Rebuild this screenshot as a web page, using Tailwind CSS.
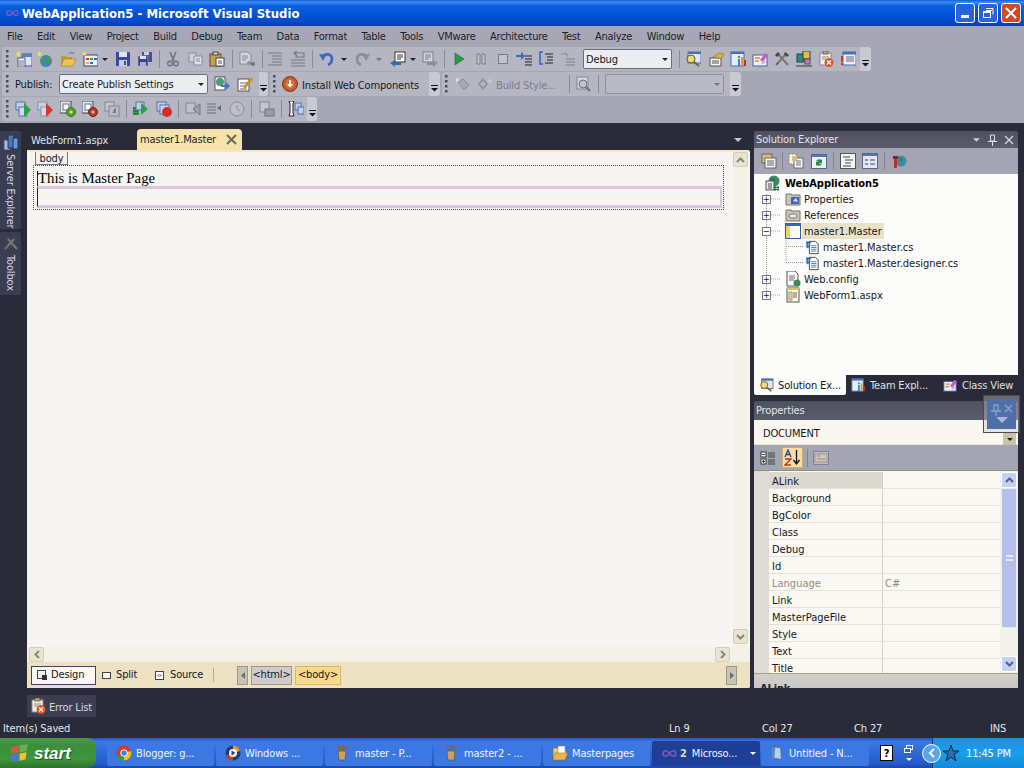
<!DOCTYPE html>
<html>
<head>
<meta charset="utf-8">
<script src="https://cdn.jsdelivr.net/npm/@tailwindcss/browser@4"></script>
</head>
<body class="overflow-hidden">
<svg class="hidden" xmlns="http://www.w3.org/2000/svg">
<defs>
<symbol id="star" viewBox="0 0 16 16"><path d="M4 0l1 3 3-1-2 3 2 2-3 0-1 3-1-3-3 0 2-2-2-3 3 1z" fill="#f7e04a"/></symbol>
<symbol id="newproj" viewBox="0 0 16 16"><rect x="6" y="3" width="10" height="12" fill="#dfe6f5" stroke="#3d5f9c"/><rect x="6" y="3" width="10" height="3" fill="#5a7fc4"/><rect x="2" y="7" width="7" height="9" fill="#fff" stroke="#555"/><path d="M3 10h5M3 12h5M3 14h5" stroke="#4a6fb0"/><use href="#star" width="10" height="10"/></symbol>
<symbol id="newweb" viewBox="0 0 16 16"><circle cx="9" cy="10" r="6" fill="#3f86b8"/><path d="M5 6l4 2 0 3-3 2zM11 5l3 3-1 4-3-2z" fill="#4f9a3a"/><use href="#star" width="10" height="10"/></symbol>
<symbol id="open" viewBox="0 0 16 16"><path d="M1 5h5l1 1h5v3H4l-3 6z" fill="#c9962f"/><path d="M4 8h12l-3 7H1z" fill="#f0c35a" stroke="#a87a20" stroke-width=".6"/><path d="M9 3c2-2 4-2 5 0" stroke="#3d5f9c" fill="none"/></symbol>
<symbol id="additem" viewBox="0 0 16 16"><rect x="2" y="4" width="14" height="11" fill="#eef0f5" stroke="#444"/><rect x="4" y="7" width="3" height="2" fill="#d33"/><rect x="8" y="7" width="3" height="2" fill="#3a3"/><rect x="12" y="7" width="3" height="2" fill="#36c"/><rect x="4" y="11" width="3" height="2" fill="#db3"/><rect x="8" y="11" width="3" height="2" fill="#36c"/><use href="#star" width="9" height="9"/></symbol>
<symbol id="save" viewBox="0 0 16 16"><path d="M1 1h13l1 1v13H1z" fill="#3a4a9c"/><rect x="4" y="1" width="8" height="5" fill="#dfe3f2"/><rect x="4" y="9" width="8" height="6" fill="#c8cde0"/><rect x="9" y="10" width="2" height="4" fill="#3a4a9c"/></symbol>
<symbol id="saveall" viewBox="0 0 16 16"><path d="M5 1h10v10H5z" fill="#4a4f92"/><rect x="7" y="1" width="5" height="3" fill="#c8cde0"/><path d="M1 5h10v10H1z" fill="#3e4487" stroke="#b0b4d0" stroke-width=".5"/><rect x="3" y="5" width="6" height="3" fill="#dfe3f2"/><rect x="3" y="11" width="6" height="4" fill="#aab0d0"/></symbol>
<symbol id="cut" viewBox="0 0 16 16"><path d="M5 1l4 9M11 1l-4 9" stroke="#70717c" stroke-width="1.6" fill="none"/><circle cx="5" cy="12.5" r="2.3" fill="none" stroke="#70717c" stroke-width="1.4"/><circle cx="11" cy="12.5" r="2.3" fill="none" stroke="#70717c" stroke-width="1.4"/></symbol>
<symbol id="copy" viewBox="0 0 16 16"><path d="M1 2h7v9H1z" fill="#d0d1d8" stroke="#8b8c96"/><path d="M6 5h8v9H6z" fill="#dddde3" stroke="#8b8c96"/><path d="M8 8h4M8 10h4" stroke="#8b8c96"/></symbol>
<symbol id="paste" viewBox="0 0 16 16"><rect x="1" y="3" width="11" height="12" fill="#c99f50" stroke="#5a4a2a"/><rect x="4" y="1" width="5" height="3" fill="#d8d8d8" stroke="#444"/><rect x="7" y="7" width="8" height="8" fill="#fff" stroke="#444"/><path d="M9 10h4M9 12h4" stroke="#556"/></symbol>
<symbol id="find" viewBox="0 0 16 16"><path d="M1 1h8l3 3v9H1z" fill="#d5d6dc" stroke="#878893"/><path d="M3 5h6M3 7h6M3 9h4" stroke="#878893"/><circle cx="10" cy="12" r="2" fill="#8c8d97"/><circle cx="14" cy="13" r="2" fill="#6e6f79"/></symbol>
<symbol id="lines1" viewBox="0 0 16 16"><path d="M1 2h14M5 5h10M5 8h10M5 11h10M1 14h14" stroke="#75767f" stroke-width="1.2"/></symbol>
<symbol id="lines2" viewBox="0 0 16 16"><path d="M5 2h9v4h-9M7 0L4 2l3 3" stroke="#75767f" fill="none" stroke-width="1.2"/><path d="M1 9h14M1 12h14M1 15h14" stroke="#75767f" stroke-width="1.2"/></symbol>
<symbol id="undo" viewBox="0 0 16 16"><path d="M3 7c2-5 10-5 10 1 0 3-2 5-4 6" stroke="#3c66c4" stroke-width="2.6" fill="none"/><path d="M0 3l7 1-3 6z" fill="#3c66c4"/></symbol>
<symbol id="redo" viewBox="0 0 16 16"><path d="M13 7C11 2 3 2 3 8c0 3 2 5 4 6" stroke="#8b8c97" stroke-width="2.6" fill="none"/><path d="M16 3L9 4l3 6z" fill="#8b8c97"/></symbol>
<symbol id="navb" viewBox="0 0 16 16"><rect x="5" y="1" width="10" height="10" fill="#fff" stroke="#333"/><path d="M7 4h6M7 6h6M7 8h4" stroke="#333"/><path d="M0 12l5-3v2h6v3H5v2z" fill="#3c66c4"/></symbol>
<symbol id="navf" viewBox="0 0 16 16"><rect x="1" y="1" width="10" height="10" fill="#d5d6dc" stroke="#7b7c88"/><path d="M3 4h6M3 6h6M3 8h4" stroke="#7b7c88"/><path d="M16 12l-5-3v2H5v3h6v2z" fill="#8c8d98"/></symbol>
<symbol id="play" viewBox="0 0 16 16"><path d="M4 2l9 6-9 6z" fill="#2f9a3a" stroke="#1f6a30" stroke-width=".6"/></symbol>
<symbol id="pause" viewBox="0 0 16 16"><path d="M4 3h3v10H4zM9 3h3v10H9z" fill="#c2c3cc" stroke="#7b7c87"/></symbol>
<symbol id="stop" viewBox="0 0 16 16"><rect x="3.5" y="3.5" width="9" height="9" fill="#c2c3cc" stroke="#7b7c87"/></symbol>
<symbol id="step1" viewBox="0 0 16 16"><path d="M0 4h5V1l4 4-4 4V6H0z" fill="#3c66c4"/><path d="M9 5h7M9 8h7M9 11h7M9 14h7" stroke="#222" stroke-width="1.2"/></symbol>
<symbol id="step2" viewBox="0 0 16 16"><path d="M5 1H2v12h3" stroke="#3c66c4" stroke-width="1.6" fill="none"/><path d="M7 3h8M9 6h6M9 9h6M7 12h8" stroke="#222" stroke-width="1.2"/></symbol>
<symbol id="step3" viewBox="0 0 16 16"><path d="M1 3h6v3M5 1l3 3" stroke="#8c8d98" fill="none"/><path d="M6 8h9M6 11h9M6 14h9" stroke="#7b7c87" stroke-width="1.2"/></symbol>
<symbol id="wfind" viewBox="0 0 16 16"><rect x="3" y="1" width="13" height="11" fill="#dfe6f5" stroke="#4a6fb0"/><rect x="3" y="1" width="13" height="2" fill="#4a6fb0"/><circle cx="6" cy="8" r="4" fill="#f0d880" stroke="#6a5a20"/><path d="M9 11l5 4" stroke="#6a6a3a" stroke-width="2"/></symbol>
<symbol id="wprops" viewBox="0 0 16 16"><path d="M2 7h11v8H2z" fill="#f4f4f4" stroke="#555"/><path d="M4 10h7M4 12h7" stroke="#555"/><path d="M5 6l6-4 5 1-3 5z" fill="#d8b040" stroke="#7a6020" stroke-width=".5"/></symbol>
<symbol id="wteam" viewBox="0 0 16 16"><rect x="1" y="1" width="13" height="14" fill="#e8ecf6" stroke="#4a6fb0"/><rect x="1" y="1" width="13" height="2" fill="#4a6fb0"/><rect x="8" y="8" width="2" height="7" fill="#3a7fd0"/><rect x="11" y="6" width="2" height="9" fill="#d0a030"/><rect x="14" y="9" width="2" height="6" fill="#c03030"/><circle cx="9" cy="6" r="1.2" fill="#40a040"/></symbol>
<symbol id="wclass" viewBox="0 0 16 16"><rect x="1" y="4" width="14" height="11" fill="#eef0f8" stroke="#4a5fa0"/><path d="M3 7h5M3 10h4" stroke="#d09030" stroke-width="1.6"/><path d="M8 9l5-7 3 2-5 7z" fill="#c060c0"/><path d="M9 12l3-3 2 2-3 2z" fill="#e0a0e0"/></symbol>
<symbol id="tools" viewBox="0 0 16 16"><path d="M2 14L12 3M14 14L4 3" stroke="#777" stroke-width="2"/><path d="M2 14l1.5-3 1.5 1.5z" fill="#c33"/><path d="M11 1l4 3-2 2-3-3zM1 4l3-3 2 2-3 3z" fill="#444"/></symbol>
<symbol id="boxes" viewBox="0 0 16 16"><rect x="1" y="3" width="7" height="8" fill="#3a8a60" stroke="#1e3a70"/><rect x="7" y="0" width="7" height="8" fill="#e0c040" stroke="#1e3a70"/><rect x="9" y="8" width="5" height="5" fill="#e070b0" stroke="#555"/><rect x="0" y="14" width="16" height="2" fill="#777"/></symbol>
<symbol id="errlist" viewBox="0 0 16 16"><rect x="2" y="2" width="11" height="12" fill="#f4f1e6" stroke="#888"/><rect x="5" y="0" width="5" height="3" fill="#c9a860" stroke="#665"/><path d="M4 6h7M4 8h4" stroke="#888"/><circle cx="11" cy="11.5" r="4.5" fill="#e0552d"/><path d="M9 9.5l4 4M13 9.5l-4 4" stroke="#fff" stroke-width="1.2"/></symbol>
<symbol id="wtasks" viewBox="0 0 16 16"><rect x="3" y="1" width="13" height="13" fill="#eef0f8" stroke="#4a6fb0"/><rect x="3" y="1" width="13" height="2.5" fill="#4a6fb0"/><path d="M6 6h8M6 8h8M6 10h8" stroke="#667"/><path d="M1 5h2v6H1z" fill="#d03030"/><rect x="1" y="12" width="2" height="2" fill="#d03030"/></symbol>
<symbol id="pubweb" viewBox="0 0 16 16"><rect x="1" y="1" width="10" height="13" fill="#fff" stroke="#555"/><circle cx="6" cy="6" r="4" fill="#4f9a7a"/><path d="M7 9h5V6l4 4-4 4v-3H7z" fill="#3c76d4"/></symbol>
<symbol id="pubedit" viewBox="0 0 16 16"><rect x="1" y="3" width="11" height="12" fill="#fff" stroke="#555"/><path d="M3 7h7M3 10h7M3 13h7" stroke="#667"/><path d="M7 10l7-9 2 2-7 9-3 1z" fill="#d09020"/></symbol>
<symbol id="install" viewBox="0 0 16 16"><circle cx="8" cy="8" r="7.5" fill="#c8582a" stroke="#7a3a1a"/><circle cx="8" cy="8" r="5" fill="#d87038"/><path d="M7 4h2v4h2l-3 3.5L5 8h2z" fill="#fff"/></symbol>
<symbol id="tag" viewBox="0 0 16 16"><path d="M3 6l5-3 6 6-5 5z" fill="#a8a9b2" stroke="#8a8b95"/><path d="M2 1l1 2 2-1-1 2 1 1-2 0-1 2-1-2-1 0 1-1z" fill="#d8d9e0"/></symbol>
<symbol id="style" viewBox="0 0 16 16"><path d="M1 8l5-6 5 6-5 6z" fill="#8f909a"/><path d="M3 8l3-3 3 3-3 3z" fill="#b8b9c2"/><path d="M13 2l1 2 2 1-2 1-1 2-1-2-2-1 2-1z" fill="#c8c9d0"/></symbol>
<symbol id="gfind" viewBox="0 0 16 16"><rect x="1" y="1" width="11" height="12" fill="#d5d6dc" stroke="#83848f"/><circle cx="7" cy="8" r="4" fill="#c0c1c9" stroke="#6e6f79"/><path d="M10 11l4 4" stroke="#6e6f79" stroke-width="2"/></symbol>
<symbol id="d1" viewBox="0 0 16 16"><rect x="1" y="1" width="9" height="8" fill="#c8d0e4" stroke="#5a70a8"/><rect x="4" y="6" width="8" height="9" fill="#cddcf0" stroke="#5a70a8"/><path d="M9 2l7 7-7 7z" fill="#2fa04a"/></symbol>
<symbol id="d2" viewBox="0 0 16 16"><rect x="1" y="1" width="9" height="8" fill="#c8d0e4" stroke="#8a90b0"/><rect x="4" y="6" width="8" height="9" fill="#cddcf0" stroke="#8a90b0"/><path d="M9 2l7 7-7 7z" fill="#d23a2a"/></symbol>
<symbol id="d3" viewBox="0 0 16 16"><rect x="0" y="0" width="11" height="12" fill="#e4e6f0" stroke="#444"/><rect x="3" y="3" width="6" height="6" fill="#fff" stroke="#5a70a8"/><circle cx="11" cy="11" r="4.5" fill="#5aa02a" stroke="#3a7018"/><circle cx="11" cy="11" r="1.5" fill="#cfe8a0"/></symbol>
<symbol id="d4" viewBox="0 0 16 16"><rect x="0" y="0" width="11" height="12" fill="#e4e6f0" stroke="#444"/><rect x="3" y="3" width="6" height="6" fill="#fff" stroke="#5a70a8"/><circle cx="11" cy="11" r="4.5" fill="#b83a2a" stroke="#702018"/><circle cx="11" cy="11" r="1.5" fill="#f0c0a0"/></symbol>
<symbol id="d5" viewBox="0 0 16 16"><rect x="1" y="1" width="9" height="9" fill="#c5c6ce" stroke="#83848f"/><rect x="5" y="5" width="10" height="10" fill="#bcbdc6" stroke="#83848f"/><path d="M12 7v5H8l1-1 1-3z" fill="#7b7c87"/></symbol>
<symbol id="d6" viewBox="0 0 16 16"><rect x="0" y="6" width="6" height="8" fill="#3a9a4a"/><path d="M0 7h5M0 10h5M0 13h5" stroke="#1f6a30"/><rect x="3" y="1" width="8" height="8" fill="#bcd0ea" stroke="#5a70a8"/><path d="M8 2l7 6-7 6z" fill="#2fa04a"/></symbol>
<symbol id="d7" viewBox="0 0 16 16"><rect x="1" y="1" width="9" height="9" fill="#c5d0e8" stroke="#5a70a8"/><rect x="4" y="4" width="9" height="9" fill="#cdd8ee" stroke="#5a70a8"/><circle cx="11" cy="11" r="5" fill="#d92a26"/></symbol>
<symbol id="d8" viewBox="0 0 16 16"><rect x="1" y="2" width="9" height="10" fill="#c0c1ca" stroke="#83848f"/><path d="M15 3L8 8l7 6z" fill="#a0a1ab" stroke="#73747f"/></symbol>
<symbol id="d9" viewBox="0 0 16 16"><path d="M1 3h9M1 6h9M1 9h9M1 12h9" stroke="#6c6d76" stroke-width="1.2"/><path d="M11 7l4-3v6z" fill="#6c6d76"/></symbol>
<symbol id="d10" viewBox="0 0 16 16"><circle cx="8" cy="8" r="7" fill="#bdbec6" stroke="#8b8c96"/><path d="M8 4v4l3 2" stroke="#8b8c96" fill="none"/></symbol>
<symbol id="d11" viewBox="0 0 16 16"><path d="M1 1h9v10H1z" fill="#c5c6ce" stroke="#84858f"/><rect x="6" y="8" width="9" height="7" fill="#9a9ba5" stroke="#74757f"/></symbol>
<symbol id="d12" viewBox="0 0 16 16"><path d="M1 0h5l-1 3v9l1 3H1l1-3V3z" fill="#f4f4f6" stroke="#222"/><rect x="7" y="2" width="6" height="7" fill="#bcd0ea" stroke="#4a70b0"/><rect x="10" y="6" width="6" height="7" fill="#bcd0ea" stroke="#4a70b0"/></symbol>
<symbol id="globeproj" viewBox="0 0 16 16"><circle cx="9" cy="6" r="5.5" fill="#3a8a70"/><path d="M6 3l4 1-1 4-3-1z" fill="#2f7a2a"/><rect x="1" y="6" width="8" height="9" fill="#e8e8f0" stroke="#555"/><path d="M3 9h4M3 11h4M3 13h4" stroke="#555"/><path d="M10 11v5M13 11v5M9 12.500h5M9 14.500h5" stroke="#176a2a"/></symbol>
<symbol id="folder" viewBox="0 0 16 16"><path d="M1 3h5l1 1h8v10H1z" fill="#c8c4b8" stroke="#7a7468"/><rect x="6" y="6" width="8" height="7" fill="#3c66c4"/><path d="M8 10l3-3 2 4z" fill="#dfe6f5"/></symbol>
<symbol id="refs" viewBox="0 0 16 16"><path d="M1 3h5l1 1h8v10H1z" fill="#c8c4b8" stroke="#7a7468"/><rect x="4" y="7" width="8" height="4" rx="2" fill="#e8e8ec" stroke="#777"/></symbol>
<symbol id="master" viewBox="0 0 16 16"><rect x=".5" y=".5" width="15" height="15" fill="#fcfcf8" stroke="#3a5a9a"/><rect x="1" y="1" width="14" height="2" fill="#3a6ab0"/><rect x="1" y="3" width="4" height="12" fill="#f0d070"/></symbol>
<symbol id="csfile" viewBox="0 0 16 16"><path d="M5 1h7l3 3v11H5z" fill="#fff" stroke="#333"/><path d="M7 6h6M7 8h6M7 10h6M7 12h6" stroke="#4a6fb0"/><path d="M1 1l6 0v2H4v3l3-1-4 4-3-4 2 1z" fill="#2a6ac0"/></symbol>
<symbol id="config" viewBox="0 0 16 16"><path d="M2 0h8l3 3v12H2z" fill="#fff" stroke="#555"/><path d="M4 5h6M4 7h6M4 9h5" stroke="#667"/><circle cx="12" cy="12" r="3.5" fill="#3a8a50"/></symbol>
<symbol id="aspx" viewBox="0 0 16 16"><rect x="2" y="1" width="12" height="14" fill="#fbf6dc" stroke="#555"/><rect x="2" y="1" width="12" height="2" fill="#d8c070"/><path d="M4 5h3v8H4z" fill="#ecd890" stroke="#998"/><path d="M8 6h4M8 8h4M8 10h4" stroke="#667"/></symbol>
<symbol id="srvexp" viewBox="0 0 16 16"><rect x="1" y="6" width="6" height="10" fill="#a8c0e4" stroke="#456"/><rect x="5" y="1" width="6" height="13" fill="#4878c8" stroke="#234"/><rect x="10" y="4" width="5" height="11" fill="#6898e0" stroke="#234"/></symbol>
<symbol id="chrome" viewBox="0 0 16 16"><circle cx="8" cy="8" r="7.5" fill="#d8392b"/><path d="M8 8L1 12a7.5 7.5 0 0 0 7 3.5z" fill="#2f9e44"/><path d="M8 8l7-2a7.5 7.5 0 0 1-7 9.5z" fill="#f4c20d"/><circle cx="8" cy="8" r="3.3" fill="#3f7fe8" stroke="#fff" stroke-width="1"/></symbol>
<symbol id="wmp" viewBox="0 0 16 16"><circle cx="8" cy="8" r="7.5" fill="#233a80"/><path d="M8 .5A7.5 7.5 0 0 1 15 6L8 8z" fill="#e8a020"/><path d="M1 10a7.500 7.500 0 0 0 7 5.500L8 8z" fill="#c84020"/><circle cx="8" cy="8" r="4" fill="#fff"/><path d="M6.500 5.500l4 2.500-4 2.500z" fill="#233a80"/></symbol>
<symbol id="paint" viewBox="0 0 16 16"><path d="M4 6h8l-1 9H5z" fill="#c9a460" stroke="#5a4a2a" stroke-width=".6"/><path d="M5 6L3 0l3 1zM8 6V0l2 1zM11 6l2-6 1 2z" fill="#d43a3a"/><path d="M7 6L6 1M9 6l2-5" stroke="#2f8f4a" stroke-width="1.3"/></symbol>
<symbol id="foldertb" viewBox="0 0 16 16"><path d="M1 3h5l1 1h7v3h1l-2 8H1z" fill="#f0c868" stroke="#8a6a20" stroke-width=".6"/><rect x="6" y="1" width="7" height="8" fill="#fff" stroke="#888" stroke-width=".6"/><path d="M3 8h13l-3 7H1z" fill="#e8b84a" stroke="#8a6a20" stroke-width=".5"/></symbol>
<symbol id="notepad" viewBox="0 0 16 16"><path d="M4 1l8 1 1 13-9-1z" fill="#b8d0ee" stroke="#456" stroke-width=".6"/><path d="M2 2l4-1-1 13-3 1z" fill="#5888c8"/></symbol>
<symbol id="vs" viewBox="0 0 16 10"><path d="M1 5c0-4 4-4 7 0s7 4 7 0-4-4-7 0-7 4-7 0z" fill="none" stroke="#7a5ab8" stroke-width="1.800"/></symbol>
<symbol id="winflag" viewBox="0 0 16 16"><path d="M1 3l6-2v6l-6 1z" fill="#e0563a"/><path d="M8 1l7-1-1 6-6 1z" fill="#6ab04a"/><path d="M1 9l6-1v6l-6 1z" fill="#4a78d8"/><path d="M8 8l6-1-1 6-5 1z" fill="#f0c030"/></symbol>
<symbol id="dd" viewBox="0 0 6 3"><path d="M0 0h6L3 3z" fill="#20212a"/></symbol>
<symbol id="ddg" viewBox="0 0 6 3"><path d="M0 0h6L3 3z" fill="#73747f"/></symbol>
<symbol id="grip" viewBox="0 0 3 18"><path d="M0 0h2.500v2.500H0zM0 5h2.500v2.500H0zM0 10h2.500v2.500H0zM0 15h2.500v2.500H0z" fill="#4c4d58"/></symbol>
<symbol id="chev" viewBox="0 0 7 7"><path d="M0 0h7v1H0z" fill="#111"/><path d="M0 3h7L3.500 6.500z" fill="#111"/></symbol>
</defs>
</svg>

<div class="w-[1024px] h-[768px] flex flex-col bg-[#2a2b38] overflow-hidden relative text-[11px] tracking-[-0.15px] leading-none text-[#15161e] [font-family:'DejaVu_Sans_Condensed','DejaVu_Sans',sans-serif]">

  <!-- title bar -->
  <div class="h-[26px] shrink-0 flex items-center pl-[6px] pr-[3px] bg-[linear-gradient(#0a5ad8_0,#3e8df2_8%,#0a5fe0_22%,#0453d8_55%,#0349c8_85%,#0a3ca8_100%)]">
    <svg class="w-[13px] h-[8px] mr-[3px]"><use href="#vs"/></svg>
    <span class="text-white font-bold text-[13px] tracking-normal">WebApplication5 - Microsoft Visual Studio</span>
    <div class="ml-auto flex gap-[3px]">
      <div class="w-[20px] h-[20px] rounded-[3px] border border-white bg-[#2a62da] relative flex items-end justify-center pb-[4px]"><div class="w-[8px] h-[3px] bg-white"></div></div>
      <div class="w-[20px] h-[20px] rounded-[3px] border border-white bg-[#2a62da] flex items-center justify-center"><svg class="w-[12px] h-[12px]" viewBox="0 0 12 12"><path d="M4 1.500h7v6M4 3.500h6" fill="none" stroke="#fff"/><rect x="1.500" y="4.500" width="7" height="6" fill="none" stroke="#fff"/><path d="M1.500 5.500h7" stroke="#fff"/></svg></div>
      <div class="w-[20px] h-[20px] rounded-[3px] border border-white bg-[#d2492a] flex items-center justify-center"><svg class="w-[12px] h-[12px]" viewBox="0 0 12 12"><path d="M1 1l10 10M11 1L1 11" stroke="#fff" stroke-width="2"/></svg></div>
    </div>
  </div>

  <!-- menus and toolbars -->
  <div class="h-[97px] shrink-0 bg-[#a6a7b4] flex flex-col">
    <div class="h-[21px] flex items-center pl-[7px] gap-[14.5px] text-[#1c1d28] tracking-[-0.25px]">
      <span>File</span><span>Edit</span><span>View</span><span>Project</span><span>Build</span><span>Debug</span><span>Team</span><span>Data</span><span>Format</span><span>Table</span><span>Tools</span><span>VMware</span><span>Architecture</span><span>Test</span><span>Analyze</span><span>Window</span><span>Help</span>
    </div>
    <!-- row 1 -->
    <div class="h-[24px] ml-[2px] w-[869px] flex items-center pl-[4px] bg-[#b5b6c2] rounded-[3px] shrink-0">
      <svg class="w-[3px] h-[18px]"><use href="#grip"/></svg>
      <svg class="w-[16px] h-[16px] ml-[7px]"><use href="#newproj"/></svg>
      <svg class="w-[16px] h-[16px] ml-[5px]"><use href="#newweb"/></svg>
      <svg class="w-[16px] h-[16px] ml-[7px]"><use href="#open"/></svg>
      <svg class="w-[16px] h-[16px] ml-[6px]"><use href="#additem"/></svg>
      <svg class="w-[6px] h-[3px] ml-[4px]"><use href="#dd"/></svg>
      <svg class="w-[16px] h-[16px] ml-[7px]"><use href="#save"/></svg>
      <svg class="w-[16px] h-[16px] ml-[6px]"><use href="#saveall"/></svg>
      <div class="w-px h-[18px] bg-[#8a8b96] ml-[6px]"></div>
      <svg class="w-[16px] h-[16px] ml-[5px]"><use href="#cut"/></svg>
      <svg class="w-[16px] h-[16px] ml-[7px]"><use href="#copy"/></svg>
      <svg class="w-[16px] h-[16px] ml-[5px]"><use href="#paste"/></svg>
      <div class="w-px h-[18px] bg-[#8a8b96] ml-[7px]"></div>
      <svg class="w-[16px] h-[16px] ml-[6px]"><use href="#find"/></svg>
      <div class="w-px h-[18px] bg-[#8a8b96] ml-[7px]"></div>
      <svg class="w-[16px] h-[16px] ml-[4px]"><use href="#lines1"/></svg>
      <svg class="w-[16px] h-[16px] ml-[7px]"><use href="#lines2"/></svg>
      <div class="w-px h-[18px] bg-[#8a8b96] ml-[6px]"></div>
      <svg class="w-[16px] h-[16px] ml-[6px]"><use href="#undo"/></svg>
      <svg class="w-[6px] h-[3px] ml-[6px]"><use href="#dd"/></svg>
      <svg class="w-[16px] h-[16px] ml-[7px]"><use href="#redo"/></svg>
      <svg class="w-[6px] h-[3px] ml-[6px]"><use href="#ddg"/></svg>
      <svg class="w-[16px] h-[16px] ml-[8px]"><use href="#navb"/></svg>
      <svg class="w-[6px] h-[3px] ml-[4px]"><use href="#dd"/></svg>
      <svg class="w-[16px] h-[16px] ml-[6px]"><use href="#navf"/></svg>
      <div class="w-px h-[18px] bg-[#8a8b96] ml-[6px]"></div>
      <svg class="w-[16px] h-[16px] ml-[6px]"><use href="#play"/></svg>
      <svg class="w-[16px] h-[16px] ml-[6px]"><use href="#pause"/></svg>
      <svg class="w-[16px] h-[16px] ml-[6px]"><use href="#stop"/></svg>
      <svg class="w-[16px] h-[16px] ml-[5px]"><use href="#step1"/></svg>
      <svg class="w-[16px] h-[16px] ml-[6px]"><use href="#step2"/></svg>
      <svg class="w-[16px] h-[16px] ml-[6px]"><use href="#step3"/></svg>
      <div class="w-[89px] h-[20px] ml-[7px] bg-[#ecedf1] border border-[#6c6d7a] rounded-[2px] flex items-center pl-[2px] justify-between pr-[3px]"><span>Debug</span><svg class="w-[6px] h-[3px]"><use href="#dd"/></svg></div>
      <div class="w-px h-[18px] bg-[#8a8b96] ml-[7px]"></div>
      <svg class="w-[16px] h-[16px] ml-[5px]"><use href="#wfind"/></svg>
      <svg class="w-[16px] h-[16px] ml-[7px]"><use href="#wprops"/></svg>
      <svg class="w-[16px] h-[16px] ml-[6px]"><use href="#wteam"/></svg>
      <svg class="w-[16px] h-[16px] ml-[6px]"><use href="#wclass"/></svg>
      <svg class="w-[16px] h-[16px] ml-[6px]"><use href="#tools"/></svg>
      <svg class="w-[16px] h-[16px] ml-[6px]"><use href="#boxes"/></svg>
      <svg class="w-[16px] h-[16px] ml-[6px]"><use href="#errlist"/></svg>
      <svg class="w-[16px] h-[16px] ml-[6px]"><use href="#wtasks"/></svg>
      <div class="ml-[4px] w-[11px] self-stretch bg-[#c8c9d2] rounded-r-[3px] flex items-end justify-center pb-[4px]"><svg class="w-[7px] h-[7px]"><use href="#chev"/></svg></div>
    </div>
    <!-- row 2 -->
    <div class="h-[24px] mt-[1px] ml-[2px] flex shrink-0">
      <div class="w-[266px] flex items-center pl-[4px] bg-[#b5b6c2] rounded-[3px]">
        <svg class="w-[3px] h-[18px]"><use href="#grip"/></svg>
        <span class="ml-[6px] w-[37px] whitespace-nowrap">Publish:</span>
        <div class="w-[149px] h-[20px] ml-[7px] bg-[#ecedf1] border border-[#6c6d7a] rounded-[2px] flex items-center pl-[2px] justify-between pr-[3px]"><span>Create Publish Settings</span><svg class="w-[6px] h-[3px]"><use href="#dd"/></svg></div>
        <svg class="w-[16px] h-[16px] ml-[6px]"><use href="#pubweb"/></svg>
        <svg class="w-[16px] h-[16px] ml-[7px]"><use href="#pubedit"/></svg>
        <div class="ml-auto w-[9px] self-stretch bg-[#c8c9d2] rounded-r-[3px] flex items-end justify-center pb-[4px]"><svg class="w-[7px] h-[7px]"><use href="#chev"/></svg></div>
      </div>
      <div class="w-[170px] ml-[2px] flex items-center pl-[3px] bg-[#b5b6c2] rounded-[3px]">
        <svg class="w-[3px] h-[18px]"><use href="#grip"/></svg>
        <svg class="w-[16px] h-[16px] ml-[6px]"><use href="#install"/></svg>
        <span class="ml-[4px] pt-[3px] whitespace-nowrap">Install Web Components</span>
        <div class="ml-auto w-[11px] self-stretch bg-[#c8c9d2] rounded-r-[3px] flex items-end justify-center pb-[4px]"><svg class="w-[7px] h-[7px]"><use href="#chev"/></svg></div>
      </div>
      <div class="w-[299px] ml-[2px] flex items-center pl-[3px] bg-[#b5b6c2] rounded-[3px]">
        <svg class="w-[3px] h-[18px]"><use href="#grip"/></svg>
        <svg class="w-[16px] h-[16px] ml-[7px]"><use href="#tag"/></svg>
        <svg class="w-[16px] h-[16px] ml-[6px]"><use href="#style"/></svg>
        <span class="ml-[3px] w-[62px] pt-[3px] whitespace-nowrap text-[#7c7d88]">Build Style...</span>
        <div class="w-px h-[18px] bg-[#8a8b96] ml-[11px]"></div>
        <svg class="w-[16px] h-[16px] ml-[6px]"><use href="#gfind"/></svg>
        <div class="w-px h-[18px] bg-[#8a8b96] ml-[6px]"></div>
        <div class="w-[119px] h-[20px] ml-[6px] bg-[#b9bac5] border border-[#8f909c] rounded-[2px] flex items-center justify-end pr-[3px]"><svg class="w-[6px] h-[3px]"><use href="#ddg"/></svg></div>
        <div class="ml-auto w-[11px] self-stretch bg-[#c8c9d2] rounded-r-[3px] flex items-end justify-center pb-[4px]"><svg class="w-[7px] h-[7px]"><use href="#chev"/></svg></div>
      </div>
    </div>
    <!-- row 3 -->
    <div class="h-[24px] mt-[1px] ml-[2px] w-[315px] flex items-center pl-[4px] bg-[#b5b6c2] rounded-[3px] shrink-0">
      <svg class="w-[3px] h-[18px]"><use href="#grip"/></svg>
      <svg class="w-[16px] h-[16px] ml-[6px]"><use href="#d1"/></svg>
      <svg class="w-[16px] h-[16px] ml-[6px]"><use href="#d2"/></svg>
      <svg class="w-[16px] h-[16px] ml-[7px]"><use href="#d3"/></svg>
      <svg class="w-[16px] h-[16px] ml-[6px]"><use href="#d4"/></svg>
      <svg class="w-[16px] h-[16px] ml-[6px]"><use href="#d5"/></svg>
      <div class="w-px h-[18px] bg-[#8a8b96] ml-[6px]"></div>
      <svg class="w-[16px] h-[16px] ml-[6px]"><use href="#d6"/></svg>
      <svg class="w-[16px] h-[16px] ml-[7px]"><use href="#d7"/></svg>
      <div class="w-px h-[18px] bg-[#8a8b96] ml-[6px]"></div>
      <svg class="w-[16px] h-[16px] ml-[6px]"><use href="#d8"/></svg>
      <svg class="w-[16px] h-[16px] ml-[5px]"><use href="#d9"/></svg>
      <svg class="w-[16px] h-[16px] ml-[7px]"><use href="#d10"/></svg>
      <div class="w-px h-[18px] bg-[#8a8b96] ml-[6px]"></div>
      <svg class="w-[16px] h-[16px] ml-[7px]"><use href="#d11"/></svg>
      <div class="w-px h-[18px] bg-[#8a8b96] ml-[6px]"></div>
      <svg class="w-[16px] h-[16px] ml-[6px]"><use href="#d12"/></svg>
      <div class="ml-auto w-[10px] self-stretch bg-[#c8c9d2] rounded-r-[3px] flex items-end justify-center pb-[4px]"><svg class="w-[7px] h-[7px]"><use href="#chev"/></svg></div>
    </div>
    <div class="h-[2px]"></div>
  </div>

  <!-- main -->
  <div class="flex-1 min-h-0 flex">
    <!-- left rail -->
    <div class="w-[27px] shrink-0 pt-[8px] flex flex-col gap-[3px]">
      <div class="w-[21px] h-[98px] bg-[#3b3d52] rounded-r-[2px] flex flex-col items-center pt-[3px] text-[#d9dae2]">
        <svg class="w-[16px] h-[16px] shrink-0"><use href="#srvexp"/></svg>
        <span class="mt-[4px] whitespace-nowrap [writing-mode:vertical-rl]">Server Explorer</span>
      </div>
      <div class="w-[21px] h-[63px] bg-[#3b3d52] rounded-r-[2px] flex flex-col items-center pt-[3px] text-[#d9dae2]">
        <svg class="w-[16px] h-[16px] shrink-0"><use href="#tools"/></svg>
        <span class="mt-[4px] whitespace-nowrap [writing-mode:vertical-rl]">Toolbox</span>
      </div>
    </div>

    <!-- editor column -->
    <div class="w-[723px] shrink-0 flex flex-col pt-[6px]">
      <div class="h-[21px] flex items-end relative shrink-0">
        <span class="ml-[4px] h-[19px] w-[106px] flex items-center text-[#e0e1e8]">WebForm1.aspx</span>
        <div class="h-[21px] w-[105px] bg-[#f6e3ab] rounded-t-[4px] flex items-center pl-[3px] text-[#1c1d28]">
          <span class="w-[79px]">master1.Master</span>
          <svg class="w-[11px] h-[11px] ml-[7px]" viewBox="0 0 11 11"><path d="M1 1l9 9M10 1l-9 9" stroke="#6d6a50" stroke-width="2"/></svg>
        </div>
        <svg class="w-[8px] h-[4px] absolute right-[8px] top-[9px]" viewBox="0 0 6 3"><path d="M0 0h6L3 3z" fill="#c5c6cf"/></svg>
      </div>
      <div class="flex-none h-[538px] bg-[#f6f5f2] rounded-r-[2px] flex flex-col border-t-[2px] border-[#f6e8bd]">
        <div class="flex-1 min-h-0 flex">
          <div class="flex-1 min-w-0 pl-[6px] pr-[9px] relative">
            <div class="ml-[2px] h-[13px] w-[33px] border-x border-b border-[#77777a] flex items-center justify-center bg-[#f2f1ec]">body</div>
            <div class="h-[45px] mt-0 border border-dotted border-[#45454f] pl-[3px] pt-[5px]">
              <div class="text-[14.8px] tracking-normal [font-family:'Liberation_Serif',serif] text-black h-[15px] leading-[15px] border-l border-[#222] pl-0">This is Master Page</div>
              <div class="mt-0 h-[22px] mr-[1px] border-t-[3px] border-[#d8c6dc] border-b-[3px] border-r-[2px] border-b-[#d8c6dc] border-l border-l-[#222]"></div>
            </div>
          </div>
          <div class="w-[15px] mr-[2px] shrink-0 bg-[#f3f1e8] flex flex-col pb-[3px]">
            <div class="h-[15px] bg-[#e9e4d2] border border-[#d3ceb9] rounded-[2px] flex items-center justify-center"><svg class="w-[9px] h-[6px]" viewBox="0 0 9 6"><path d="M1 5l3.500-3.500L8 5" fill="none" stroke="#8c8670" stroke-width="2"/></svg></div>
            <div class="flex-1"></div>
            <div class="h-[15px] bg-[#e9e4d2] border border-[#d3ceb9] rounded-[2px] flex items-center justify-center"><svg class="w-[9px] h-[6px]" viewBox="0 0 9 6"><path d="M1 1l3.500 3.500L8 1" fill="none" stroke="#8c8670" stroke-width="2"/></svg></div>
          </div>
        </div>
        <div class="h-[15px] shrink-0 pl-[2px] pr-[20px] bg-[#f3f1e8] flex justify-between">
          <div class="w-[15px] h-[15px] bg-[#e9e4d2] border border-[#d3ceb9] rounded-[2px] flex items-center justify-center"><svg class="w-[6px] h-[9px]" viewBox="0 0 6 9"><path d="M5 1L1.500 4.500 5 8" fill="none" stroke="#8c8670" stroke-width="2"/></svg></div>
          <div class="w-[15px] h-[15px] bg-[#e9e4d2] border border-[#d3ceb9] rounded-[2px] flex items-center justify-center"><svg class="w-[6px] h-[9px]" viewBox="0 0 6 9"><path d="M1 1l3.500 3.500L1 8" fill="none" stroke="#8c8670" stroke-width="2"/></svg></div>
        </div>
        <div class="h-[26px] shrink-0 bg-[#ece1c2] flex items-center pl-[4px] rounded-b-[2px]">
          <div class="w-[65px] h-[19px] bg-[#f8f7f2] border border-[#31476f] flex items-center pl-[5px] gap-[4px]">
            <svg class="w-[10px] h-[10px]" viewBox="0 0 10 10"><rect x=".5" y=".5" width="8" height="8" fill="#eee" stroke="#444"/><rect x="5" y="5" width="5" height="5" fill="#333"/></svg><span class="pb-[2px]">Design</span>
          </div>
          <svg class="w-[9px] h-[7px] ml-[6px]" viewBox="0 0 9 7"><rect x=".5" y=".5" width="8" height="6" fill="#fff" stroke="#444"/></svg>
          <span class="ml-[5px] w-[39px] pb-[2px]">Split</span>
          <svg class="w-[9px] h-[9px]" viewBox="0 0 9 9"><rect x=".5" y=".5" width="8" height="8" fill="#fff" stroke="#444"/><path d="M3 4.500l1-1M3 4.500l1 1M6 4.500l-1-1M6 4.500l-1 1" stroke="#222"/></svg>
          <span class="ml-[6px] w-[32px] pb-[2px]">Source</span>
          <div class="w-px h-[14px] bg-[#b5ab8d] ml-[11px]"></div>
          <div class="w-[11px] h-[19px] ml-[23px] bg-[#c8c4b4] border border-[#9b9888] flex items-center justify-center"><svg class="w-[4px] h-[7px]" viewBox="0 0 4 7"><path d="M4 0v7L0 3.500z" fill="#6f6d60"/></svg></div>
          <div class="w-[41px] h-[19px] ml-[3px] bg-[#cfccd0] border border-[#9b9888] flex items-center justify-center pb-[2px]">&lt;html&gt;</div>
          <div class="w-[46px] h-[19px] ml-[3px] bg-[#f6d98a] border border-[#d9b869] flex items-center justify-center pb-[2px]">&lt;body&gt;</div>
          <div class="w-[11px] h-[19px] ml-auto mr-[13px] bg-[#c8c4b4] border border-[#9b9888] flex items-center justify-center"><svg class="w-[4px] h-[7px]" viewBox="0 0 4 7"><path d="M0 0v7l4-3.500z" fill="#6f6d60"/></svg></div>
        </div>
      </div>
      <div class="mt-[7px] h-[22px] w-[69px] bg-[#3b3d52] flex items-center pl-[3px] gap-[3px] text-[#d9dae2] shrink-0">
        <svg class="w-[16px] h-[16px]"><use href="#errlist"/></svg><span class="pt-[2px]">Error List</span>
      </div>
    </div>

    <!-- right panels -->
    <div class="w-[264px] ml-[4px] shrink-0 flex flex-col pt-[8px]">
      <div class="h-[17px] shrink-0 bg-[linear-gradient(#4f5162,#5a5c6c)] rounded-t-[2px] flex items-center pl-[2px] text-[#e4e5ea]">
        <span>Solution Explorer</span>
        <svg class="ml-auto w-[7px] h-[4px]" viewBox="0 0 6 3"><path d="M0 0h6L3 3z" fill="#cfd0d8"/></svg>
        <svg class="ml-[8px] w-[9px] h-[12px]" viewBox="0 0 9 12"><path d="M2.500 1h4v6h-4zM0 7.500h9M4.500 8v4" stroke="#e0e1e8" fill="none"/></svg>
        <svg class="ml-[7px] mr-[4px] w-[10px] h-[10px]" viewBox="0 0 10 10"><path d="M1 1l8 8M9 1l-8 8" stroke="#d8d9e0" stroke-width="1.300"/></svg>
      </div>
      <div class="h-[26px] shrink-0 bg-[#a4a5b3] flex items-center pl-[7px]">
        <svg class="w-[16px] h-[16px]" viewBox="0 0 16 16"><rect x="1" y="1" width="10" height="9" fill="#d8c070" stroke="#666"/><rect x="4" y="5" width="11" height="10" fill="#f4f4f4" stroke="#666"/><path d="M6 8h7M6 10h7M6 12h7" stroke="#666"/></svg>
        <div class="w-px h-[18px] bg-[#83848f] ml-[5px]"></div>
        <svg class="w-[16px] h-[16px] ml-[5px]" viewBox="0 0 16 16"><path d="M1 1h7v10H1z" fill="#f4f4f4" stroke="#888" stroke-dasharray="2 1"/><rect x="6" y="5" width="9" height="10" fill="#fff" stroke="#666"/><rect x="4" y="3" width="5" height="5" fill="#d8c070"/><path d="M8 8h5M8 10h5M8 12h5" stroke="#667"/></svg>
        <svg class="w-[16px] h-[16px] ml-[7px]" viewBox="0 0 16 16"><rect x=".5" y="1.500" width="15" height="14" fill="#eef0f8" stroke="#55668a"/><rect x="1" y="2" width="14" height="2" fill="#5078b8"/><path d="M5 9a3 3 0 0 1 5-2l1-1v4H7l1-1a2 2 0 0 0-3 0zM11 10a3 3 0 0 1-5 2l-1 1V9h4l-1 1a2 2 0 0 0 3 0z" fill="#2a8a3a"/></svg>
        <div class="w-px h-[18px] bg-[#83848f] ml-[6px]"></div>
        <svg class="w-[16px] h-[16px] ml-[6px]" viewBox="0 0 16 16"><rect x=".5" y=".5" width="15" height="15" fill="#f6f6f8" stroke="#555"/><path d="M3 4h7M5 7h8M5 10h6M3 13h8" stroke="#444"/></svg>
        <svg class="w-[16px] h-[16px] ml-[6px]" viewBox="0 0 16 16"><rect x=".5" y=".5" width="15" height="15" fill="#e4e8f4" stroke="#56688c"/><rect x="1" y="1" width="14" height="2" fill="#5078b8"/><path d="M3 6h3v2H3zM3 10h3v2H3zM8 6h5v2H8zM8 10h5v2H8z" fill="#8b95ad"/></svg>
        <div class="w-px h-[18px] bg-[#83848f] ml-[6px]"></div>
        <svg class="w-[16px] h-[16px] ml-[6px]" viewBox="0 0 16 16"><circle cx="10" cy="8" r="5.500" fill="#3f8ab0"/><path d="M8 4l4 1-1 4-3-1z" fill="#3a8a3a"/><rect x="2" y="3" width="5" height="3" fill="#8a2020"/><rect x="3" y="6" width="3" height="9" rx="1" fill="#c82a22"/></svg>
      </div>
      <div class="h-[201px] shrink-0 bg-[#fcfcfa] pt-[1px] relative flex flex-col tracking-[-0.03px]">
        <svg class="absolute left-0 top-0 w-[60px] h-[140px] pointer-events-none" viewBox="0 0 60 140"><path d="M12.500 20V122M17 25h10M17 41h10M17 57h10M17 105h10M17 121h10M32 64v24M32 72.500h18M32 88.500h18" stroke="#9b9b9b" stroke-dasharray="1 1" fill="none"/></svg>
        <div class="h-[16px] flex items-center pl-[11px] relative"><svg class="w-[16px] h-[16px]"><use href="#globeproj"/></svg><span class="ml-[4px] font-bold text-black">WebApplication5</span></div>
        <div class="h-[16px] flex items-center pl-[8px] relative"><div class="w-[9px] h-[9px] border border-[#777] bg-white flex items-center justify-center text-[9px] leading-none">+</div><svg class="w-[16px] h-[16px] ml-[14px]"><use href="#folder"/></svg><span class="ml-[3px]">Properties</span></div>
        <div class="h-[16px] flex items-center pl-[8px] relative"><div class="w-[9px] h-[9px] border border-[#777] bg-white flex items-center justify-center text-[9px] leading-none">+</div><svg class="w-[16px] h-[16px] ml-[14px]"><use href="#refs"/></svg><span class="ml-[3px]">References</span></div>
        <div class="h-[16px] flex items-center pl-[8px] relative"><div class="w-[9px] h-[9px] border border-[#777] bg-white flex items-center justify-center text-[9px] leading-none">−</div><svg class="w-[16px] h-[16px] ml-[14px]"><use href="#master"/></svg><span class="ml-px h-[16px] w-[82px] pl-[2px] flex items-center bg-[#e9e2c9]">master1.Master</span></div>
        <div class="h-[16px] flex items-center pl-[51px] relative"><svg class="w-[14px] h-[15px]"><use href="#csfile"/></svg><span class="ml-[4px]">master1.Master.cs</span></div>
        <div class="h-[16px] flex items-center pl-[51px] relative"><svg class="w-[14px] h-[15px]"><use href="#csfile"/></svg><span class="ml-[4px]">master1.Master.designer.cs</span></div>
        <div class="h-[16px] flex items-center pl-[8px] relative"><div class="w-[9px] h-[9px] border border-[#777] bg-white flex items-center justify-center text-[9px] leading-none">+</div><svg class="w-[16px] h-[16px] ml-[14px]"><use href="#config"/></svg><span class="ml-[3px]">Web.config</span></div>
        <div class="h-[16px] flex items-center pl-[8px] relative"><div class="w-[9px] h-[9px] border border-[#777] bg-white flex items-center justify-center text-[9px] leading-none">+</div><svg class="w-[16px] h-[16px] ml-[14px]"><use href="#aspx"/></svg><span class="ml-[3px]">WebForm1.aspx</span></div>
      </div>
      <div class="h-[20px] shrink-0 flex">
        <div class="w-[92px] bg-[#fcfcfa] rounded-b-[2px] flex items-center pl-[4px] gap-[4px]"><svg class="w-[16px] h-[14px] shrink-0"><use href="#wfind"/></svg><span class="whitespace-nowrap">Solution Ex...</span></div>
        <div class="w-[92px] flex items-center pl-[4px] gap-[4px] text-[#e0e1e8]"><svg class="w-[16px] h-[14px] shrink-0"><use href="#wteam"/></svg><span class="whitespace-nowrap">Team Expl...</span></div>
        <div class="w-[80px] flex items-center pl-[4px] gap-[4px] text-[#e0e1e8]"><svg class="w-[16px] h-[14px] shrink-0"><use href="#wclass"/></svg><span class="whitespace-nowrap">Class View</span></div>
      </div>
      <div class="h-[6px] shrink-0"></div>
      <div class="h-[19px] shrink-0 bg-[linear-gradient(#4f5162,#5a5c6c)] rounded-t-[2px] flex items-center pl-[2px] text-[#e4e5ea]">
        <span>Properties</span>
        <svg class="ml-[190px] w-[7px] h-[4px]" viewBox="0 0 6 3"><path d="M0 0h6L3 3z" fill="#cfd0d8"/></svg>
      </div>
      <div class="h-[25px] shrink-0 bg-[#f9f7ef] border-b border-[#ebe7d5] flex items-center pl-[9px] justify-between">
        <span class="pt-[2px]">DOCUMENT</span>
      </div>
      <div class="h-[26px] shrink-0 bg-[#a4a5b3] flex items-center pl-[6px] border-b border-[#8f907a]">
        <svg class="w-[16px] h-[16px]" viewBox="0 0 16 16"><rect x="1" y="2" width="5" height="5" fill="#fff" stroke="#333"/><rect x="1" y="9" width="5" height="5" fill="#fff" stroke="#333"/><path d="M2 4.500h3M2 11.500h3M3.500 10v3M8 3h7M8 5h7M8 7h7M8 10h7M8 12h7M8 14h7" stroke="#444"/></svg>
        <div class="w-[21px] h-[21px] ml-[6px] bg-[#f5dfa6] border border-[#c9ad6e] flex items-center justify-center relative">
          <svg class="w-[17px] h-[17px]" viewBox="0 0 17 17"><path d="M1 8l3-7 3 7M2.200 5.500h3.600" fill="none" stroke="#2d3f9e" stroke-width="1.300"/><path d="M1 10h6L1 16h6" fill="none" stroke="#b03a1a" stroke-width="1.300"/><path d="M12.500 1v13M9.500 11l3 4 3-4" stroke="#111" fill="none" stroke-width="1.300"/></svg>
        </div>
        <div class="w-px h-[18px] bg-[#83848f] ml-[4px]"></div>
        <svg class="w-[16px] h-[14px] ml-[5px]" viewBox="0 0 16 14"><rect x=".5" y=".5" width="15" height="13" fill="#bcbcc0" stroke="#83848f"/><rect x="2" y="3" width="12" height="8" fill="#ccc8bc" stroke="#9a9690"/><path d="M4 5h3M4 8h8" stroke="#8b8b8b"/></svg>
      </div>
      <div class="h-[202px] shrink-0 bg-[#f9f8f3] flex overflow-hidden tracking-normal">
        <div class="w-[246px] bg-[#f9f8f3] flex flex-col pt-[1px] overflow-hidden border-l-[15px] border-[#dedcd4] shrink-0">
          <div class="h-[17px] shrink-0 flex border-b border-[#e6e3d6]"><div class="w-[113px] bg-[#dcd9d0] pl-[3px] pt-[2px] flex items-center">ALink</div><div class="flex-1 border-l border-[#d6d3c6]"></div></div>
          <div class="h-[17px] shrink-0 flex border-b border-[#e6e3d6]"><div class="w-[113px] pl-[3px] pt-[2px] flex items-center">Background</div><div class="flex-1 border-l border-[#d6d3c6]"></div></div>
          <div class="h-[17px] shrink-0 flex border-b border-[#e6e3d6]"><div class="w-[113px] pl-[3px] pt-[2px] flex items-center">BgColor</div><div class="flex-1 border-l border-[#d6d3c6]"></div></div>
          <div class="h-[17px] shrink-0 flex border-b border-[#e6e3d6]"><div class="w-[113px] pl-[3px] pt-[2px] flex items-center">Class</div><div class="flex-1 border-l border-[#d6d3c6]"></div></div>
          <div class="h-[17px] shrink-0 flex border-b border-[#e6e3d6]"><div class="w-[113px] pl-[3px] pt-[2px] flex items-center">Debug</div><div class="flex-1 border-l border-[#d6d3c6]"></div></div>
          <div class="h-[17px] shrink-0 flex border-b border-[#e6e3d6]"><div class="w-[113px] pl-[3px] pt-[2px] flex items-center">Id</div><div class="flex-1 border-l border-[#d6d3c6]"></div></div>
          <div class="h-[17px] shrink-0 flex border-b border-[#e6e3d6]"><div class="w-[113px] pl-[3px] pt-[2px] flex items-center text-[#8f8e88]">Language</div><div class="flex-1 border-l border-[#d6d3c6] pl-[2px] pt-[2px] flex items-center text-[#8f8e88]">C#</div></div>
          <div class="h-[17px] shrink-0 flex border-b border-[#e6e3d6]"><div class="w-[113px] pl-[3px] pt-[2px] flex items-center">Link</div><div class="flex-1 border-l border-[#d6d3c6]"></div></div>
          <div class="h-[17px] shrink-0 flex border-b border-[#e6e3d6]"><div class="w-[113px] pl-[3px] pt-[2px] flex items-center">MasterPageFile</div><div class="flex-1 border-l border-[#d6d3c6]"></div></div>
          <div class="h-[17px] shrink-0 flex border-b border-[#e6e3d6]"><div class="w-[113px] pl-[3px] pt-[2px] flex items-center">Style</div><div class="flex-1 border-l border-[#d6d3c6]"></div></div>
          <div class="h-[17px] shrink-0 flex border-b border-[#e6e3d6]"><div class="w-[113px] pl-[3px] pt-[2px] flex items-center">Text</div><div class="flex-1 border-l border-[#d6d3c6]"></div></div>
          <div class="h-[17px] shrink-0 flex"><div class="w-[113px] pl-[3px] pt-[2px] flex items-center">Title</div><div class="flex-1 border-l border-[#d6d3c6]"></div></div>
        </div>
        <div class="w-[18px] shrink-0 flex flex-col bg-[#f3f1e8] pt-[1px] pb-[1px]">
          <div class="h-[16px] mx-[1px] bg-[#c5d2f4] border border-white rounded-[2px] flex items-center justify-center"><svg class="w-[9px] h-[6px]" viewBox="0 0 9 6"><path d="M1 5l3.500-3.500L8 5" fill="none" stroke="#4d6185" stroke-width="2"/></svg></div>
          <div class="h-[140px] mx-[1px] bg-[#b6bfec] border border-[#e8eaf8] rounded-[2px] flex items-center justify-center"><div class="w-[7px] h-[6px] border-y-2 border-[#e6e9fa]"></div></div>
          <div class="flex-1"></div>
          <div class="h-[16px] mx-[1px] bg-[#c5d2f4] border border-white rounded-[2px] flex items-center justify-center"><svg class="w-[9px] h-[6px]" viewBox="0 0 9 6"><path d="M1 1l3.500 3.500L8 1" fill="none" stroke="#4d6185" stroke-width="2"/></svg></div>
        </div>
      </div>
      <div class="h-[15px] shrink-0 bg-[linear-gradient(#d2d0cc,#c8c7c6)] border-t border-[#a8a187] pl-[6px] pt-[9px] overflow-hidden font-bold text-[#222]">ALink</div>
    </div>
  </div>

  <!-- status bar -->
  <div class="h-[21px] shrink-0 flex items-center text-[#e6e7ee] pl-[3px] relative">
    <span class="w-[666px] pt-[2px]">Item(s) Saved</span>
    <span class="w-[93px] pt-[2px]">Ln 9</span>
    <span class="w-[92px] pt-[2px]">Col 27</span>
    <span class="w-[136px] pt-[2px]">Ch 27</span>
    <span class="pt-[2px]">INS</span>
  </div>

  <!-- taskbar -->
  <div class="h-[30px] shrink-0 flex items-center bg-[linear-gradient(#2456c8_0,#3a79e4_12%,#2e68d6_50%,#245bc8_85%,#1c46a8_100%)] text-white relative">
    <div class="w-[96px] h-[30px] rounded-r-[9px] bg-[linear-gradient(#4b9a4a,#3c8e3c_25%,#3e963e_70%,#2c702c)] flex items-center pl-[10px] gap-[5px] shrink-0">
      <svg class="w-[19px] h-[19px]"><use href="#winflag"/></svg>
      <span class="italic font-bold text-[17px] tracking-normal [font-family:'Liberation_Sans',sans-serif] [text-shadow:1px_1px_1px_#1c4a1c]">start</span>
    </div>
    <div class="ml-[11px] w-[107px] h-[25px] bg-[#3c78e2] rounded-[2px] flex items-center pl-[9px] gap-[4px] shrink-0 text-[#f1f4ff]"><svg class="w-[16px] h-[16px]"><use href="#chrome"/></svg><span>Blogger: g...</span></div>
    <div class="ml-[2px] w-[107px] h-[25px] bg-[#3c78e2] rounded-[2px] flex items-center pl-[9px] gap-[4px] shrink-0 text-[#f1f4ff]"><svg class="w-[16px] h-[16px]"><use href="#wmp"/></svg><span>Windows ...</span></div>
    <div class="ml-[2px] w-[107px] h-[25px] bg-[#3c78e2] rounded-[2px] flex items-center pl-[9px] gap-[5px] shrink-0 text-[#f1f4ff]"><svg class="w-[16px] h-[16px]"><use href="#paint"/></svg><span>master - P...</span></div>
    <div class="ml-[2px] w-[107px] h-[25px] bg-[#3c78e2] rounded-[2px] flex items-center pl-[9px] gap-[5px] shrink-0 text-[#f1f4ff]"><svg class="w-[16px] h-[16px]"><use href="#paint"/></svg><span>master2 - ...</span></div>
    <div class="ml-[2px] w-[107px] h-[25px] bg-[#3c78e2] rounded-[2px] flex items-center pl-[9px] gap-[4px] shrink-0 text-[#f1f4ff]"><svg class="w-[16px] h-[16px]"><use href="#foldertb"/></svg><span>Masterpages</span></div>
    <div class="ml-[2px] w-[108px] h-[25px] bg-[#1f3f97] rounded-[2px] flex items-center pl-[10px] shrink-0 text-[#f1f4ff]"><svg class="w-[15px] h-[9px]"><use href="#vs"/></svg><span class="ml-[3px] font-bold text-[#e5d8c8]">2</span><span class="ml-[5px]">Microso...</span><svg class="ml-auto mr-[4px] w-[6px] h-[3px]" viewBox="0 0 6 3"><path d="M0 0h6L3 3z" fill="#fff"/></svg></div>
    <div class="ml-px w-[108px] h-[25px] bg-[#3c78e2] rounded-[2px] flex items-center pl-[9px] gap-[5px] shrink-0 text-[#f1f4ff]"><svg class="w-[14px] h-[16px]"><use href="#notepad"/></svg><span>Untitled - N...</span></div>
    <div class="ml-[11px] w-[13px] h-[16px] bg-white border border-black flex items-center justify-center text-black font-bold text-[11px] shrink-0">?</div>
    <div class="ml-[11px] w-[9px] flex flex-col items-center gap-[5px] shrink-0">
      <svg class="w-[9px] h-[8px]" viewBox="0 0 9 8"><rect x="2.500" y=".5" width="6" height="4" fill="none" stroke="#fff"/><rect x=".5" y="3.500" width="6" height="4" fill="#2e68d6" stroke="#fff"/></svg>
      <svg class="w-[6px] h-[3px]" viewBox="0 0 6 3"><path d="M0 0h6L3 3z" fill="#fff"/></svg>
    </div>
    <div class="ml-auto w-[92px] h-[30px] shrink-0 bg-[linear-gradient(#1a90e0,#18a0ea_50%,#1288d8)] border-l border-[#0a3a80] flex items-center relative">
      <div class="w-[19px] h-[19px] -ml-[11px] rounded-full bg-[#5da4ee] border border-white flex items-center justify-center shrink-0"><svg class="w-[8px] h-[10px]" viewBox="0 0 8 10"><path d="M6 1L2 5l4 4" fill="none" stroke="#fff" stroke-width="2"/></svg></div>
      <svg class="w-[16px] h-[16px] ml-[2px] shrink-0" viewBox="0 0 16 16"><path d="M8 0l2 6h6l-5 3.500L13 16l-5-4-5 4 2-6.500L0 6h6z" fill="#2a6fb0" stroke="#10254a" stroke-width="1"/></svg>
      <span class="ml-[7px] whitespace-nowrap">11:45 PM</span>
    </div>
  </div>

  <!-- docking guide overlay -->
  <div class="absolute left-[983px] top-[395px] w-[37px] h-[38px] border border-[#4a4a50] bg-[#c8c8c8]/40 p-[3px]">
    <div class="w-full h-full bg-[#4f6fa8] flex flex-col items-center justify-center relative">
      <svg class="w-[24px] h-[22px]" viewBox="0 0 24 22"><path d="M4 2h4v6H4zM1 8h10M6 8v5M15 2l7 7M22 2l-7 7" stroke="#8fa4c8" fill="none" stroke-width="1.300"/><path d="M6 14h12l-6 6z" fill="#a8b8d4"/></svg>
    </div>
  </div>
  <div class="absolute left-[1003px] top-[433px] w-[13px] h-[12px] bg-[#c9c3a8] flex items-center justify-center"><svg class="w-[6px] h-[3px]"><use href="#dd"/></svg></div>
</div>
</body>
</html>
